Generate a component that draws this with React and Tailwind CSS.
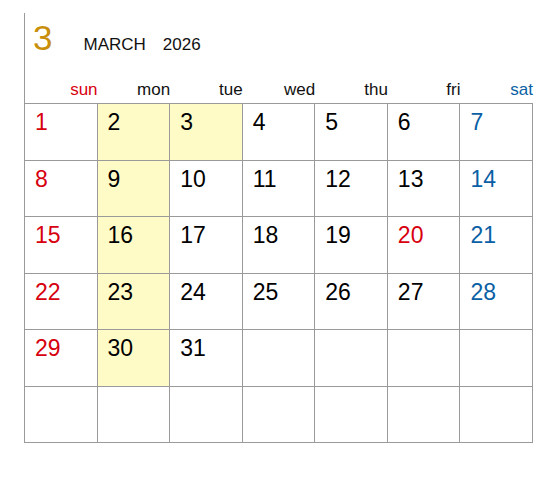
import React from "react";

// March 2026 wall-calendar page
const DAYS = ["sun", "mon", "tue", "wed", "thu", "fri", "sat"];
const FIRST_WEEKDAY = 0; // Mar 1 2026 is a Sunday
const DAYS_IN_MONTH = 31;
const HOLIDAYS = [20];
const HIGHLIGHT = [2, 3, 9, 16, 23, 30];

function dayColor(day, col) {
  if (col === 0 || HOLIDAYS.includes(day)) return "text-[#d7000f]";
  if (col === 6) return "text-[#0b5fa5]";
  return "text-black";
}

export default function App() {
  const cells = [];
  for (let i = 0; i < 42; i++) {
    const day = i - FIRST_WEEKDAY + 1;
    cells.push(day >= 1 && day <= DAYS_IN_MONTH ? day : null);
  }

  return (
    <div className="w-[560px] h-[481px] bg-white font-['Liberation_Sans',Arial,sans-serif] pt-[13px]">
      <div className="ml-[24px] w-[509px] border-l border-[#9a9a9a]">
        <div className="h-[90px] flex flex-col">
          <div className="flex items-baseline pl-[8px] pt-[7px]">
            <span className="text-[35px] leading-none text-[#c98f0b]">3</span>
            <span className="ml-[31px] text-[17px] leading-none text-[#111]">MARCH</span>
            <span className="ml-[17px] text-[17px] leading-none text-[#111]">2026</span>
          </div>
          <div className="mt-auto grid grid-cols-7 pb-[5px]">
            {DAYS.map((d, i) => (
              <div
                key={d}
                className={`text-right text-[17px] leading-none ${
                  i === 0 ? "text-[#d7000f]" : i === 6 ? "text-[#0b5fa5]" : "text-[#111]"
                }`}
              >
                {d}
              </div>
            ))}
          </div>
        </div>
        <div className="grid grid-cols-7 grid-rows-6 h-[340px] border-t border-[#9a9a9a]">
          {cells.map((day, i) => (
            <div
              key={i}
              className={`border-r border-b border-[#9a9a9a] pl-[10px] pt-[7px] ${
                day && HIGHLIGHT.includes(day) ? "bg-[#fffbc7]" : ""
              }`}
            >
              {day && (
                <span className={`text-[23px] leading-none ${dayColor(day, i % 7)}`}>{day}</span>
              )}
            </div>
          ))}
        </div>
      </div>
    </div>
  );
}
